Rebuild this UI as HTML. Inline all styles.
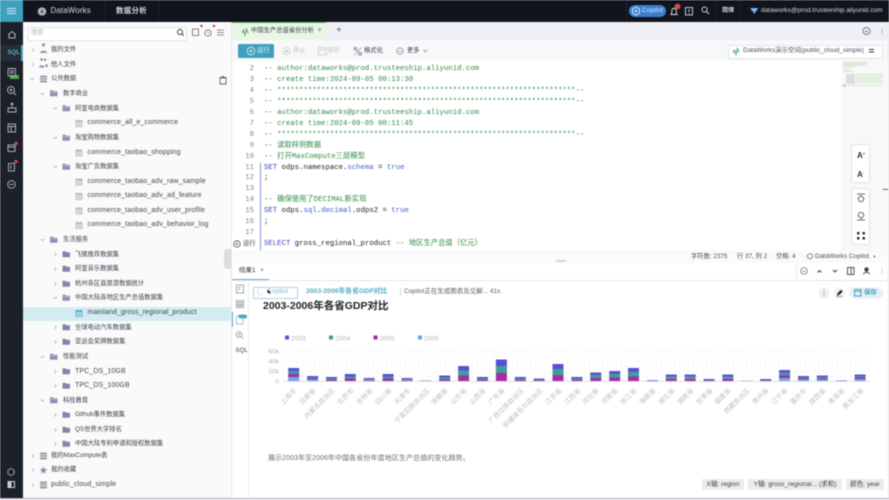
<!DOCTYPE html>
<html lang="zh">
<head>
<meta charset="utf-8">
<title>DataWorks 数据分析</title>
<style>
html,body{margin:0;padding:0;background:#fff}
#p{position:relative;width:889px;height:500px;overflow:hidden;background:#fff;font-family:"Liberation Sans","Noto Sans CJK SC",sans-serif;filter:blur(.4px)}
#p div{position:absolute;white-space:nowrap}
.r{font-size:6.3px;line-height:12px;height:12px;color:#3a404e}
.l{font-size:7px;line-height:12px;height:12px;color:#404654;letter-spacing:.12px}
.c{font-family:"Liberation Mono","Noto Sans CJK SC",monospace;font-size:7.32px;line-height:11px;height:11px;left:264px;color:#2f8a45;white-space:pre}
.n{font-family:"Liberation Mono",monospace;font-size:7.32px;line-height:11px;height:11px;width:24px;left:230px;text-align:right;color:#7f848e}
.k{color:#3f3fc0}.v{color:#222}.b{color:#3c60c8}
.chip{background:#ececee;color:#444;font-size:6.6px;line-height:11px;height:11px;text-align:center;top:479px}
svg{position:absolute;left:0;top:0;overflow:visible}
</style>
</head>
<body>
<div id="p">
<svg width="0" height="0">
<defs>
<symbol id="fo" viewBox="0 0 10 8"><path d="M0 0h4l1 1.3h5V8H0z" fill="#8f8fb4"/><path d="M1 2.6h8" stroke="#e4e4ee" stroke-width=".6"/></symbol>
<symbol id="fc" viewBox="0 0 10 8"><path d="M0 0h4l1 1.3h5V8H0z" fill="#8585ab"/></symbol>
<symbol id="tb" viewBox="0 0 7 7"><rect width="7" height="7" fill="#b8bcc4"/><path d="M.8 2.2h5.4v4H.8z" fill="#f0f1f3"/><path d="M2.7 2v4.4M4.5 2v4.4M.8 3.6h5.4M.8 5h5.4" stroke="#b8bcc4" stroke-width=".5"/></symbol>
<symbol id="db" viewBox="0 0 7 7"><rect width="7" height="7" rx="1" fill="#9a9caa"/><path d="M0 2.3h7M0 4.6h7" stroke="#f5f5f5" stroke-width=".7"/></symbol>
<symbol id="dn" viewBox="0 0 5 5"><path d="M.8 1.5L2.5 3.2 4.2 1.5" fill="none" stroke="#9a9ea8" stroke-width=".6"/></symbol>
<symbol id="rt" viewBox="0 0 5 5"><path d="M1.5.8L3.2 2.5 1.5 4.2" fill="none" stroke="#9a9ea8" stroke-width=".6"/></symbol>
</defs>
</svg>

<!-- top bar -->
<div style="left:0;top:0;width:889px;height:22px;background:#10141d"></div>
<div style="left:0;top:0;width:23px;height:22px;background:#3f9fbe"></div>
<div style="left:7px;top:8px;width:9px;height:1px;background:#cfe8f0;box-shadow:0 2.5px 0 #cfe8f0,0 5px 0 #cfe8f0"></div>
<div style="left:104px;top:0;width:1px;height:22px;background:#1d222c"></div>
<div style="left:158px;top:0;width:1px;height:22px;background:#1d222c"></div>
<svg width="889" height="22">
<path d="M42 7l4 2v5l-4 2-4-2V9z" fill="#c9ccd2"/>
<path d="M42 7v9M38 9l8 5M46 9l-8 5" stroke="#10141d" stroke-width=".5"/>
</svg>
<div style="left:50.5px;top:5px;font-size:8px;line-height:12px;color:#d8dade;letter-spacing:.1px">DataWorks</div>
<div style="left:116px;top:4px;font-size:7.4px;line-height:13px;color:#d8dade;font-weight:bold;letter-spacing:.35px">数据分析</div>
<div style="left:629px;top:5px;width:37px;height:12px;border-radius:6px;background:#3a7fd0"></div>
<svg width="889" height="22">
<path d="M636 7l3.5 2v4l-3.5 2-3.5-2V9z" fill="none" stroke="#dbe8f7" stroke-width="1"/>
<circle cx="636" cy="11" r="1.2" fill="#dbe8f7"/>
<path d="M671 14.5c1-1 .7-3 1-5 .3-1.500 3.700-1.500 4 0 .3 2 0 4 1 5z" fill="none" stroke="#d8dade" stroke-width=".9"/>
<circle cx="677.500" cy="6.500" r="2.900" fill="#d94a3f"/>
<rect x="685.500" y="7.500" width="7" height="7.500" fill="none" stroke="#d8dade" stroke-width=".9"/>
<path d="M689 9v3M689 13v1" stroke="#d8dade" stroke-width=".9"/>
<circle cx="704.500" cy="9.500" r="2.600" fill="none" stroke="#d8dade" stroke-width=".9"/>
<path d="M706.500 11.500l2.500 2.500" stroke="#d8dade" stroke-width="1"/>
<path d="M626.500 0v22M715.500 0v22M740.500 0v22" stroke="#1d222c" stroke-width="1"/>
<path d="M750 8h8.500l-4.200 6z" fill="#63a4ee"/>
<path d="M752 9.500h4.500" stroke="#fff" stroke-width=".5"/>
</svg>
<div style="left:642px;top:5px;font-size:6.800px;line-height:12px;color:#dbe8f7">Copilot</div>
<div style="left:722px;top:5px;font-size:6.200px;line-height:12px;color:#d8dade;font-weight:bold">简体</div>
<div style="left:761px;top:5px;font-size:6.550px;line-height:12px;color:#d8dade">dataworks@prod.trusteeship.aliyunid.com</div>

<!-- left rail -->
<div style="left:0;top:22px;width:23px;height:476px;background:#1c202b"></div>
<div style="left:0;top:45px;width:23px;height:16px;background:#262c38"></div>
<div style="left:21px;top:45px;width:2px;height:16px;background:#4ea6bf"></div>
<div style="left:7.500px;top:47px;font-size:6px;line-height:12px;color:#58aec4;font-weight:bold">SQL</div>
<div style="left:10px;top:75px;width:9px;height:4px;background:#4ea64e"></div>
<svg width="23" height="498">
<g fill="none" stroke="#b6b9c0" stroke-width=".9">
<path d="M8 35l4-3.500 4 3.500M9 34.500V38h6v-3.500"/>
<rect x="8" y="68.500" width="7.500" height="7.500" rx="1"/><path d="M9.500 71h4.500M9.500 73h4.500"/>
<circle cx="11" cy="90" r="3.500"/><path d="M13.500 92.500l2.500 2.500M10 89l2 2M12 89l-2 2"/>
<path d="M8 108h8v4H8zM12 107v-4M10.500 104.500l1.500-1.500 1.500 1.500"/>
<rect x="8" y="124" width="7.500" height="8"/><path d="M8 126.500h7.500M11 126.500v5.500"/>
<rect x="8" y="145" width="7" height="6.500"/><path d="M8 147h7"/>
<rect x="8.500" y="163.500" width="6" height="7.500"/><path d="M11 165.500v3.500"/>
<circle cx="11.500" cy="184.500" r="3.800"/><path d="M9.500 184.500h4"/>
<circle cx="11" cy="472" r="3.200" stroke-dasharray="1.500 .5" stroke-width="1.100"/>
</g>
<rect x="7.500" y="481" width="7.500" height="7" fill="#c9ccd2"/>
<rect x="11.500" y="482" width="2.500" height="5" fill="#1c202b"/>
<circle cx="16" cy="143.500" r="1.700" fill="#d94a3f"/>
<circle cx="16" cy="161.500" r="1.700" fill="#d94a3f"/>
</svg>

<!-- tree panel -->
<div style="left:23px;top:22px;width:208px;height:476px;background:#fafafa"></div>
<div style="left:231px;top:22px;width:1px;height:476px;background:#e6e7ea"></div>
<div style="left:27.500px;top:26.500px;width:157px;height:12px;background:#fff;border:.5px solid #e3e4e8"></div>
<div style="left:31px;top:26.500px;font-size:6.300px;line-height:12px;color:#b0b3ba">搜索</div>
<div style="left:23px;top:306.500px;width:208px;height:14px;background:#d4ecf1"></div>
<svg width="232" height="498">
<circle cx="180" cy="32" r="2.500" fill="none" stroke="#333" stroke-width=".9"/>
<path d="M182 34l1.800 1.800" stroke="#333" stroke-width=".9"/>
<rect x="192.500" y="29" width="6" height="6.500" fill="none" stroke="#666a74" stroke-width=".8"/>
<circle cx="208" cy="33" r="3.200" fill="none" stroke="#666a74" stroke-width=".8"/>
<path d="M208 31.500V33l1 .8" fill="none" stroke="#666a74" stroke-width=".6"/>
<path d="M217 30h7M217 32.500h7M217 35h7" stroke="#666a74" stroke-width=".8"/>
<circle cx="201.500" cy="26" r="1.200" fill="#e0332e"/>
<circle cx="214" cy="26" r="1.200" fill="#e0332e"/>
<path d="M220 78h6v6h-6zM219.500 77.500h7M222 76.500h2" fill="none" stroke="#666a74" stroke-width=".9"/>
<path d="M43.500 46.500a1.700 1.700 0 1 1 .01 0zM40 53c0-3 7-3 7 0z" fill="#8f92a6"/>
<path d="M41.500 61a1.400 1.400 0 1 1 .01 0zM39 67.500c0-2.800 5.500-2.800 5.500 0zM45 61a1.300 1.300 0 1 1 .01 0zM45.500 64c2 0 2.500 1.500 2.500 3h-2.500z" fill="#8f92a6"/>
<use href="#db" x="40" y="75.500" width="7" height="7"/>
<use href="#db" x="40" y="452.500" width="7" height="7"/>
<use href="#db" x="40" y="481.500" width="7" height="7"/>
<path d="M43.500 466.500l1.100 2.400 2.600.3-1.900 1.800.5 2.600-2.300-1.300-2.300 1.300.5-2.600-1.900-1.800 2.600-.3z" fill="#8f8fb0"/>
<use href="#rt" x="30.500" y="47.500" width="5" height="5"/><use href="#rt" x="30.500" y="62" width="5" height="5"/><use href="#dn" x="29.500" y="76.500" width="5" height="5"/>
<use href="#rt" x="30.500" y="453.500" width="5" height="5"/><use href="#rt" x="30.500" y="467.500" width="5" height="5"/><use href="#rt" x="30.500" y="482.500" width="5" height="5"/>
<use href="#dn" x="40" y="91.500" width="5" height="5"/><use href="#dn" x="40" y="237.500" width="5" height="5"/><use href="#dn" x="40" y="354.500" width="5" height="5"/><use href="#dn" x="40" y="398" width="5" height="5"/>
<use href="#fo" x="50" y="90" width="7.500" height="6.500"/><use href="#fo" x="50" y="236.500" width="7.500" height="6.500"/><use href="#fo" x="50" y="353.500" width="7.500" height="6.500"/><use href="#fo" x="50" y="397" width="7.500" height="6.500"/>
<use href="#dn" x="53" y="106" width="5" height="5"/><use href="#dn" x="53" y="135.500" width="5" height="5"/><use href="#dn" x="53" y="164.500" width="5" height="5"/><use href="#dn" x="53" y="295.500" width="5" height="5"/>
<use href="#rt" x="53" y="252" width="5" height="5"/><use href="#rt" x="53" y="266.500" width="5" height="5"/><use href="#rt" x="53" y="281.500" width="5" height="5"/><use href="#rt" x="53" y="325" width="5" height="5"/><use href="#rt" x="53" y="339.500" width="5" height="5"/><use href="#rt" x="53" y="369" width="5" height="5"/><use href="#rt" x="53" y="383.500" width="5" height="5"/><use href="#rt" x="53" y="412.500" width="5" height="5"/><use href="#rt" x="53" y="427.500" width="5" height="5"/><use href="#rt" x="53" y="441.500" width="5" height="5"/>
<use href="#fo" x="62.500" y="105" width="7.500" height="6.500"/><use href="#fo" x="62.500" y="134.500" width="7.500" height="6.500"/><use href="#fo" x="62.500" y="163.500" width="7.500" height="6.500"/><use href="#fo" x="62.500" y="294.500" width="7.500" height="6.500"/>
<use href="#fc" x="62.500" y="251" width="7.500" height="6.500"/><use href="#fc" x="62.500" y="265.500" width="7.500" height="6.500"/><use href="#fc" x="62.500" y="280.500" width="7.500" height="6.500"/><use href="#fc" x="62.500" y="324" width="7.500" height="6.500"/><use href="#fc" x="62.500" y="338.500" width="7.500" height="6.500"/><use href="#fc" x="62.500" y="368" width="7.500" height="6.500"/><use href="#fc" x="62.500" y="382.500" width="7.500" height="6.500"/><use href="#fc" x="62.500" y="411.500" width="7.500" height="6.500"/><use href="#fc" x="62.500" y="426.500" width="7.500" height="6.500"/><use href="#fc" x="62.500" y="440.500" width="7.500" height="6.500"/>
<use href="#tb" x="75.500" y="120" width="7" height="7"/><use href="#tb" x="75.500" y="149.500" width="7" height="7"/><use href="#tb" x="75.500" y="178.500" width="7" height="7"/><use href="#tb" x="75.500" y="193" width="7" height="7"/><use href="#tb" x="75.500" y="207.500" width="7" height="7"/><use href="#tb" x="75.500" y="222" width="7" height="7"/>
<rect x="75.500" y="310" width="7" height="7" fill="#54aec8"/><path d="M76.300 312h5.400v4.300h-5.400z" fill="#d4ecf1"/><path d="M78.200 312v4.300M80 312v4.300M76.300 313.500h5.400M76.300 315h5.400" stroke="#54aec8" stroke-width=".4"/>
</svg>
<div class="r" style="left:51px;top:44px">我的文件</div>
<div class="r" style="left:51px;top:58.500px">他人文件</div>
<div class="r" style="left:51px;top:73px">公共数据</div>
<div class="r" style="left:63px;top:88px">数字商业</div>
<div class="r" style="left:75px;top:102.500px">阿里电商数据集</div>
<div class="l" style="left:87.500px;top:117px">commerce_all_e_commerce</div>
<div class="r" style="left:75px;top:132px">淘宝购物数据集</div>
<div class="l" style="left:87.500px;top:146.500px">commerce_taobao_shopping</div>
<div class="r" style="left:75px;top:161px">淘宝广告数据集</div>
<div class="l" style="left:87.500px;top:175.500px">commerce_taobao_adv_raw_sample</div>
<div class="l" style="left:87.500px;top:190px">commerce_taobao_adv_ad_feature</div>
<div class="l" style="left:87.500px;top:204.500px">commerce_taobao_adv_user_profile</div>
<div class="l" style="left:87.500px;top:219px">commerce_taobao_adv_behavior_log</div>
<div class="r" style="left:63px;top:234px">生活服务</div>
<div class="r" style="left:75px;top:248.500px">飞猪推荐数据集</div>
<div class="r" style="left:75px;top:263px">阿里音乐数据集</div>
<div class="r" style="left:75px;top:278px">杭州各区县旅游数据统计</div>
<div class="r" style="left:75px;top:292px">中国大陆各地区生产总值数据集</div>
<div class="l" style="left:87.500px;top:307px;color:#3a4250">mainland_gross_regional_product</div>
<div class="r" style="left:75px;top:321.500px">全球电动汽车数据集</div>
<div class="r" style="left:75px;top:336px">亚运会奖牌数据集</div>
<div class="r" style="left:63px;top:351px">性能测试</div>
<div class="l" style="left:75px;top:365.500px">TPC_DS_10GB</div>
<div class="l" style="left:75px;top:380px">TPC_DS_100GB</div>
<div class="r" style="left:63px;top:394.500px">科技教育</div>
<div class="r" style="left:75px;top:409px">Github事件数据集</div>
<div class="r" style="left:75px;top:424px">QS世界大学排名</div>
<div class="r" style="left:75px;top:438px">中国大陆专利申请和授权数据集</div>
<div class="r" style="left:51px;top:450px">我的MaxCompute表</div>
<div class="r" style="left:51px;top:464px">我的收藏</div>
<div class="l" style="left:51px;top:479px">public_cloud_simple</div>

<!-- tab bar -->
<div style="left:232px;top:22px;width:657px;height:18px;background:#eff0f6"></div>
<div style="left:232px;top:22px;width:94px;height:18px;background:#e9f6e6;border-top:.5px solid #6cc06c;box-sizing:border-box"></div>
<div style="left:251px;top:25px;font-size:6.300px;line-height:12px;color:#3a404e">中国生产总值省份分析</div>
<div style="left:317.500px;top:25px;font-size:7px;line-height:12px;color:#666">×</div>
<div style="left:336px;top:24.500px;font-size:10px;line-height:12px;color:#666">+</div>
<svg width="889" height="62">
<path d="M242 33l1.500-3 1.500 5 1.500-6 1.500 4" fill="none" stroke="#4aa96c" stroke-width="1"/>
<circle cx="866.500" cy="31" r="3.500" fill="none" stroke="#5a5e68" stroke-width=".8"/>
<path d="M865 30.500l1.500 1.500 1.500-1.500" fill="none" stroke="#5a5e68" stroke-width=".7"/>
<path d="M882 29v.8M882 31v.8M882 33v.8" stroke="#5a5e68" stroke-width=".9"/>
</svg>

<!-- toolbar -->
<div style="left:232px;top:40px;width:657px;height:21px;background:#f7f8f9;border-bottom:.5px solid #eceded"></div>
<div style="left:238px;top:44px;width:36px;height:14px;background:#3f9fbe;border-radius:1.500px"></div>
<div style="left:257px;top:45px;font-size:6.300px;line-height:12px;color:#e6f3f7">运行</div>
<div style="left:293px;top:45px;font-size:6.300px;line-height:12px;color:#c2c5ca">停止</div>
<div style="left:327px;top:45px;font-size:6.300px;line-height:12px;color:#c2c5ca">保存</div>
<div style="left:364px;top:45px;font-size:6.300px;line-height:12px;color:#3a404e">格式化</div>
<div style="left:407px;top:45px;font-size:6.300px;line-height:12px;color:#3a404e">更多</div>
<svg width="889" height="62">
<circle cx="251" cy="51" r="3.800" fill="none" stroke="#dff0f5" stroke-width=".8"/><path d="M250 49.300v3.400l2.600-1.700z" fill="#dff0f5"/>
<circle cx="286.500" cy="51" r="3.500" fill="none" stroke="#c8cacf" stroke-width=".8"/><rect x="285.200" y="49.700" width="2.600" height="2.600" fill="#c8cacf"/>
<path d="M318.500 47.500h7.500v7.500h-7.500zM320.500 47.500v2.500h3.500v-2.500" fill="none" stroke="#c8cacf" stroke-width=".8"/>
<path d="M354 47.500l7.500 7.500M361.500 47.500l-7.500 7.500M354 47.500h3v2.500h-3zM358.500 52.500h3v2.500h-3z" fill="none" stroke="#8a8e98" stroke-width=".7"/>
<circle cx="400" cy="51" r="3.200" fill="none" stroke="#777b85" stroke-width=".7"/><path d="M398.500 51h3" stroke="#777b85" stroke-width=".7"/>
<path d="M423.500 50l1.700 1.700 1.700-1.700" fill="none" stroke="#777b85" stroke-width=".7"/>
</svg>
<div style="left:727.500px;top:44.500px;width:153px;height:12.500px;background:#fff;border:.5px solid #e4e5e8;border-radius:1px"></div>
<div style="left:743px;top:45px;font-size:6.500px;line-height:12px;color:#4a505e">DataWorks演示空间(public_cloud_simple)</div>
<svg width="889" height="62">
<path d="M733 53l1.500-3 1.500 4.500 1.500-6 1.500 4" fill="none" stroke="#4aa96c" stroke-width="1"/>
<path d="M869 49.500h5M874 52h-5" stroke="#333" stroke-width="1.100"/>
</svg>

<!-- editor -->
<div style="left:232px;top:61px;width:657px;height:189px;background:#fff"></div>
<div style="left:841px;top:61px;width:46px;height:189px;background:#f8f8f8"></div>
<div style="left:260px;top:163px;width:1.200px;height:87px;background:#7d8fd0"></div>
<div class="n" style="top:63.500px">2</div><div class="c" style="top:63.500px">-- author:dataworks@prod.trusteeship.aliyunid.com</div>
<div class="n" style="top:74.500px">3</div><div class="c" style="top:74.500px">-- create time:2024-09-05 00:13:30</div>
<div class="n" style="top:85.500px">4</div><div class="c" style="top:85.500px">-- ********************************************************************--</div>
<div class="n" style="top:96.500px">5</div><div class="c" style="top:96.500px">-- ********************************************************************--</div>
<div class="n" style="top:107.500px">6</div><div class="c" style="top:107.500px">-- author:dataworks@prod.trusteeship.aliyunid.com</div>
<div class="n" style="top:118.500px">7</div><div class="c" style="top:118.500px">-- create time:2024-09-05 00:11:45</div>
<div class="n" style="top:129.500px">8</div><div class="c" style="top:129.500px">-- ********************************************************************--</div>
<div class="n" style="top:140.500px">9</div><div class="c" style="top:140.500px">-- 读取样例数据</div>
<div class="n" style="top:151.500px">10</div><div class="c" style="top:151.500px">-- 打开MaxCompute三层模型</div>
<div class="n" style="top:162.500px">11</div><div class="c v" style="top:162.500px"><span class="k">SET</span> odps.namespace.<span class="b">schema</span> = <span class="b">true</span></div>
<div class="n" style="top:173px">12</div><div class="c v" style="top:173px">;</div>
<div class="n" style="top:184px">13</div>
<div class="n" style="top:195px">14</div><div class="c" style="top:195px">-- 确保使用了DECIMAL新实现</div>
<div class="n" style="top:206px">15</div><div class="c v" style="top:206px"><span class="k">SET</span> odps.<span class="b">sql</span>.<span class="b">decimal</span>.odps2 = <span class="b">true</span></div>
<div class="n" style="top:217px">16</div><div class="c v" style="top:217px">;</div>
<div class="n" style="top:228px">17</div>
<div class="c v" style="top:239px"><span class="k">SELECT</span>  gross_regional_product <span style="color:#2f8a45">-- 地区生产总值（亿元）</span></div>
<div style="left:243px;top:238px;font-size:6.300px;line-height:12px;color:#3a404e">运行</div>
<svg width="889" height="250">
<circle cx="237" cy="244" r="3.200" fill="none" stroke="#444" stroke-width=".8"/><path d="M236.200 242.600v2.800l2-1.400z" fill="#444"/>
<g opacity=".55">
<rect x="843" y="62" width="24" height=".7" fill="#8fca84"/><rect x="843" y="63.500" width="24" height=".7" fill="#8fca84"/><rect x="843" y="65" width="22" height=".7" fill="#8fca84"/><rect x="843" y="66.500" width="12" height=".7" fill="#8fca84"/>
<rect x="843" y="69" width="6" height=".7" fill="#aaa"/><rect x="843" y="71" width="10" height=".7" fill="#aaa"/>
<rect x="846" y="74" width="9" height="10" fill="#c8c8cc"/>
<rect x="856" y="74" width="27" height=".8" fill="#9bcf91"/><rect x="856" y="76" width="27" height=".8" fill="#9bcf91"/><rect x="856" y="78" width="25" height=".8" fill="#9bcf91"/><rect x="856" y="80" width="27" height=".8" fill="#9bcf91"/><rect x="856" y="82" width="27" height=".8" fill="#9bcf91"/>
<rect x="843" y="84.500" width="3" height="2" fill="#8c8cd0"/><rect x="848" y="85" width="35" height=".8" fill="#ccc"/>
</g>
</svg>

<!-- side float buttons -->
<div style="left:852px;top:145px;width:17px;height:37px;background:#fff;box-shadow:0 0 1.500px rgba(0,0,0,.3)"></div>
<div style="left:852px;top:189px;width:17px;height:55px;background:#fff;box-shadow:0 0 1.500px rgba(0,0,0,.3)"></div>
<div style="left:857px;top:148px;font-size:8px;line-height:11px;color:#333;font-weight:bold">A<span style="font-size:4px;vertical-align:3px">+</span></div>
<div style="left:857px;top:167px;font-size:8px;line-height:11px;color:#333;font-weight:bold">A<span style="font-size:4px;vertical-align:3px">-</span></div>
<svg width="889" height="250">
<path d="M857 194h8" stroke="#444" stroke-width=".8"/><path d="M861 195.500l3 3-1.500 3h-3l-1.500-3z" fill="none" stroke="#444" stroke-width=".8"/>
<path d="M857 220h8" stroke="#444" stroke-width=".8"/><path d="M861 218.500l-3-3 1.500-3h3l1.500 3z" fill="none" stroke="#444" stroke-width=".8"/>
<path d="M857 232h2.500v2.500H857zM862.500 232H865v2.500h-2.500zM857 237h2.500v2.500H857zM862.500 237H865v2.500h-2.500z" fill="#333"/>
<rect x="882.500" y="189" width="6" height=".8" fill="#444"/>
</svg>

<!-- status row -->
<div style="left:232px;top:250px;width:657px;height:12.500px;background:#fafafa;border-bottom:.5px solid #e6e7ea"></div>
<div style="left:224px;top:249px;width:7px;height:20px;background:#dcdde2;border-radius:3px 0 0 3px"></div>
<div style="left:556px;top:260px;width:10px;height:2px;background:#d2d4da"></div>
<div style="left:691px;top:250.500px;font-size:6.300px;line-height:12px;color:#4a4f5b">字符数: 2375</div>
<div style="left:737px;top:250.500px;font-size:6.300px;line-height:12px;color:#4a4f5b">行 37, 列 2</div>
<div style="left:776px;top:250.500px;font-size:6.300px;line-height:12px;color:#4a4f5b">空格: 4</div>
<div style="left:815px;top:250.500px;font-size:6.500px;line-height:12px;color:#4a4f5b">DataWorks Copilot</div>
<svg width="889" height="262">
<path d="M810 253.500l2.500 1.500v2.500l-2.500 1.500-2.500-1.500V255z" fill="none" stroke="#666" stroke-width=".7"/>
<circle cx="874.500" cy="256.500" r="1" fill="#3aa54a"/>
</svg>

<!-- result tabs -->
<div style="left:232px;top:263px;width:657px;height:17px;background:#fff;border-bottom:.7px solid #e6e7ea"></div>
<div style="left:239px;top:265px;font-size:6.500px;line-height:12px;color:#333">结果1</div>
<div style="left:260px;top:265px;font-size:6.500px;line-height:12px;color:#666">×</div>
<div style="left:232px;top:279px;width:37px;height:1px;background:#5fb1c9"></div>
<div style="left:795.500px;top:263px;width:.7px;height:17px;background:#ececee"></div>
<svg width="889" height="280">
<circle cx="804" cy="271" r="3.300" fill="none" stroke="#666" stroke-width=".7"/><path d="M802.500 270.500l1.500 1.300 1.500-1.300" fill="none" stroke="#666" stroke-width=".6"/>
<path d="M817.500 272.500l2-2 2 2M833 270l2 2 2-2" fill="none" stroke="#333" stroke-width=".9"/>
<rect x="847.500" y="267.500" width="6.500" height="7" fill="none" stroke="#444" stroke-width=".9"/><path d="M851 267.500v7" stroke="#444" stroke-width=".9"/>
<circle cx="866.500" cy="269.500" r="2.200" fill="#444"/><path d="M863.500 274.500c0-3 6-3 6 0" fill="none" stroke="#444" stroke-width=".9"/>
<path d="M882 268v.8M882 270.500v.8M882 273v.8" stroke="#777" stroke-width=".9"/>
</svg>

<!-- result side -->
<div style="left:248px;top:280px;width:.7px;height:218px;background:#ececee"></div>
<div style="left:231.500px;top:312px;width:1px;height:15px;background:#5fb1c9"></div>
<svg width="250" height="360">
<g fill="none" stroke="#8d9098" stroke-width=".8">
<rect x="236.500" y="285" width="7" height="8"/><path d="M238 287.500h3M238 289.500h2"/>
<rect x="236.500" y="300.500" width="7" height="7"/><path d="M236.500 302.500h7M239 302.500v5M241 302.500v5M236.500 305h7"/>
<rect x="236.500" y="316" width="6.500" height="8" stroke="#7fbcd0"/>
<circle cx="239" cy="334.500" r="2.800"/><path d="M241 336.500l2.200 2.200M238 334.500h2M239 333.500v2"/>
</g>
<rect x="238.500" y="314.500" width="8.500" height="4" rx="2" fill="#4ea8c6"/>
</svg>
<div style="left:235.500px;top:345.500px;font-size:6px;line-height:10px;color:#777b85;font-weight:bold">SQL</div>

<!-- copilot line -->
<div style="left:253px;top:287px;width:42.500px;height:9.500px;border:.7px solid #a9d3e0;border-radius:1px;background:#fff"></div>
<div style="left:267px;top:286px;font-size:6.700px;line-height:12px;color:#7cbcd0">Copilot</div>
<svg width="889" height="300"><path d="M260 289.500a2.500 2.500 0 1 0 2.500 2.500" fill="none" stroke="#c8cacf" stroke-width=".6"/><path d="M267.500 289.500l.1 4 1-1 1.200 1.500.7-.5-1-1.500h1.200z" fill="#111"/></svg>
<div style="left:306px;top:286px;font-size:6.800px;line-height:12px;color:#53adc6;font-weight:bold">2003-2006年各省GDP对比</div>
<div style="left:400px;top:288px;width:.7px;height:8px;background:#d8d9dc"></div>
<div style="left:404px;top:286px;font-size:6.500px;line-height:12px;color:#5b606b">Copilot正在生成图表及见解... 41s</div>
<div style="left:263px;top:298.500px;font-size:10.500px;line-height:15px;color:#20232a;font-weight:bold">2003-2006年各省GDP对比</div>
<svg width="889" height="310">
<circle cx="824" cy="293" r="5.500" fill="#f0f1f3"/><path d="M824 290v.9M824 292.600v.9M824 295.200v.9" stroke="#444" stroke-width=".9"/>
<circle cx="839.500" cy="293" r="5.500" fill="#f0f1f3"/><path d="M837 295.500l1-2.500 3-3 1.500 1.500-3 3zM836.500 296.500h6" fill="#222" stroke="#222" stroke-width=".4"/>
<rect x="849" y="287.500" width="34.500" height="11" rx="5.500" fill="#e6f0f5"/>
<rect x="854.500" y="289.500" width="6.500" height="6.500" fill="none" stroke="#4ea0c0" stroke-width="1"/><path d="M854.500 291.200h6.500" stroke="#4ea0c0" stroke-width="1"/>
</svg>
<div style="left:864px;top:287px;font-size:6.400px;line-height:12px;color:#4ea0c0;font-weight:bold">保存</div>

<!-- chart -->
<svg width="889" height="500">
<g stroke="#d4d5d8" stroke-width=".8" stroke-dasharray=".9 3.600">
<path d="M283 351.500H870M283 356.500H870M283 361.500H870M283 366.500H870M283 371.500H870M283 376.500H870"/>
</g>
<path d="M283 381.300H870" stroke="#dadbdf" stroke-width=".8"/>
<g fill="#b0b3b9" font-family="Liberation Sans,sans-serif" font-size="6.600">
<text x="279" y="353.500" text-anchor="end">60k</text>
<text x="279" y="363.500" text-anchor="end">40k</text>
<text x="279" y="373.500" text-anchor="end">20k</text>
<text x="279" y="383.500" text-anchor="end">0</text>
</g>
<g font-family="Liberation Sans,Noto Sans CJK SC,sans-serif" font-size="6.600" fill="#b4b7bd">
<rect x="285" y="335.500" width="4" height="4" fill="#5a50d8"/><text x="291" y="340.500">2003</text>
<rect x="329" y="335.500" width="4" height="4" fill="#3f9d8f"/><text x="335.500" y="340.500">2004</text>
<rect x="373.500" y="335.500" width="4" height="4" fill="#a62ca8"/><text x="380" y="340.500">2005</text>
<rect x="418" y="335.500" width="4" height="4" fill="#6d9eeb"/><text x="424" y="340.500">2006</text>
</g>
<path fill="#78a3ec" d="M288.200 377h11v4h-11zM307.100 379.500h11v1.500h-11zM779.100 378h11v3h-11zM798 379.500h11v1.500h-11zM816.800 379.500h11v1.500h-11zM854.600 379h11v2h-11z"/>
<path fill="#a62ca8" d="M288.200 374h11v3h-11zM307.100 378.500h11v1h-11zM326 380h11v1h-11zM344.800 378.500h11v2.500h-11zM363.700 380.300h11v.7h-11zM382.600 378.500h11v2.500h-11zM401.500 380.300h11v.7h-11zM439.200 379.500h11v1.500h-11zM458.100 375.500h11v5.500h-11zM477 380h11v1h-11zM495.900 373h11v8h-11zM514.800 380h11v1h-11zM533.600 380.500h11v.5h-11zM552.500 375h11v6h-11zM571.400 380h11v1h-11zM590.300 378h11v3h-11zM609.200 377.500h11v3.500h-11zM628 376.500h11v4.500h-11zM665.800 378.800h11v2.200h-11zM684.700 378.800h11v2.200h-11zM703.600 380.500h11v.5h-11zM722.400 378.800h11v2.200h-11zM760.200 380.500h11v.5h-11zM779.100 375.500h11v2.500h-11zM798 378.500h11v1h-11zM816.800 378.500h11v1h-11zM854.600 377.500h11v1.500h-11z"/>
<path fill="#3f9d9a" d="M288.200 371h11v3h-11zM307.100 377.500h11v1h-11zM326 378.500h11v1.500h-11zM344.800 376.500h11v2h-11zM363.700 379.300h11v1h-11zM382.600 376.500h11v2h-11zM401.500 379.300h11v1h-11zM439.200 377.500h11v2h-11zM458.100 370.500h11v5h-11zM477 378.500h11v1.500h-11zM495.900 366h11v7h-11zM514.800 378.500h11v1.500h-11zM533.600 379.500h11v1h-11zM552.500 369h11v6h-11zM571.400 378.500h11v1.500h-11zM590.300 375h11v3h-11zM609.200 374h11v3.500h-11zM628 372h11v4.500h-11zM665.800 376.600h11v2.200h-11zM684.700 376.600h11v2.200h-11zM703.600 380h11v.5h-11zM722.400 376.600h11v2.200h-11zM760.200 380h11v.5h-11zM779.100 372.500h11v3h-11zM798 377.500h11v1h-11zM816.800 377h11v1.500h-11zM854.600 376h11v1.500h-11z"/>
<path fill="#5a50d8" d="M288.200 368h11v3h-11zM307.100 376h11v1.500h-11zM326 377h11v1.500h-11zM344.800 374h11v2.500h-11zM363.700 378h11v1.300h-11zM382.600 374h11v2.500h-11zM401.500 378h11v1.300h-11zM439.200 375.500h11v2h-11zM458.100 366h11v4.500h-11zM477 377h11v1.500h-11zM495.900 359.500h11v6.500h-11zM514.800 377h11v1.500h-11zM533.600 378.500h11v1h-11zM552.500 364h11v5h-11zM571.400 377h11v1.500h-11zM590.300 372.500h11v2.500h-11zM609.200 371h11v3h-11zM628 368h11v4h-11zM646.900 380.300h11v.7h-11zM665.800 374.500h11v2.100h-11zM684.700 374.500h11v2.100h-11zM703.600 379h11v1h-11zM722.400 374.500h11v2.100h-11zM741.300 380.700h11v.3h-11zM760.200 379h11v1h-11zM779.100 370h11v2.500h-11zM798 376h11v1.500h-11zM816.800 375.500h11v1.500h-11zM835.700 380.500h11v.5h-11zM854.600 374.500h11v1.500h-11z"/>
<path fill="#9a9ba8" d="M420.400 380.400h11v.6h-11z"/>
<g font-family="Liberation Sans,Noto Sans CJK SC,sans-serif" font-size="6.600" fill="#bcbfc5" text-anchor="end">
<text transform="translate(297,391) rotate(-45)">上海市</text>
<text transform="translate(316,391) rotate(-45)">云南省</text>
<text transform="translate(335,391) rotate(-45)">内蒙古自治区</text>
<text transform="translate(354,391) rotate(-45)">北京市</text>
<text transform="translate(373,391) rotate(-45)">吉林省</text>
<text transform="translate(392,391) rotate(-45)">四川省</text>
<text transform="translate(411,391) rotate(-45)">天津市</text>
<text transform="translate(430,391) rotate(-45)">宁夏回族自治区</text>
<text transform="translate(448,391) rotate(-45)">安徽省</text>
<text transform="translate(467,391) rotate(-45)">山东省</text>
<text transform="translate(486,391) rotate(-45)">山西省</text>
<text transform="translate(505,391) rotate(-45)">广东省</text>
<text transform="translate(524,391) rotate(-45)">广西壮族自治区</text>
<text transform="translate(543,391) rotate(-45)">新疆维吾尔自治区</text>
<text transform="translate(562,391) rotate(-45)">江苏省</text>
<text transform="translate(581,391) rotate(-45)">江西省</text>
<text transform="translate(599,391) rotate(-45)">河北省</text>
<text transform="translate(618,391) rotate(-45)">河南省</text>
<text transform="translate(637,391) rotate(-45)">浙江省</text>
<text transform="translate(656,391) rotate(-45)">海南省</text>
<text transform="translate(675,391) rotate(-45)">湖北省</text>
<text transform="translate(694,391) rotate(-45)">湖南省</text>
<text transform="translate(713,391) rotate(-45)">甘肃省</text>
<text transform="translate(731,391) rotate(-45)">福建省</text>
<text transform="translate(750,391) rotate(-45)">西藏自治区</text>
<text transform="translate(769,391) rotate(-45)">贵州省</text>
<text transform="translate(788,391) rotate(-45)">辽宁省</text>
<text transform="translate(807,391) rotate(-45)">重庆市</text>
<text transform="translate(826,391) rotate(-45)">陕西省</text>
<text transform="translate(845,391) rotate(-45)">青海省</text>
<text transform="translate(864,391) rotate(-45)">黑龙江省</text>
</g>
</svg>
<div style="left:268px;top:452px;font-size:7.100px;line-height:13px;color:#6b6f78">展示2003年至2006年中国各省份年度地区生产总值的变化趋势。</div>

<!-- chips -->
<div class="chip" style="left:702px;width:42px">X轴: region</div>
<div class="chip" style="left:748px;width:94px">Y轴: gross_regional... (求和)</div>
<div class="chip" style="left:846px;width:38px">颜色: year</div>

<!-- page edges -->
<div style="left:887.500px;top:22px;width:1.500px;height:476px;background:#e4e5e9"></div>
<div style="left:0;top:497.500px;width:889px;height:1.200px;background:#a4a6b2"></div>
<div style="left:0;top:498.700px;width:889px;height:1.300px;background:#fff"></div>
</div>
</body>
</html>
